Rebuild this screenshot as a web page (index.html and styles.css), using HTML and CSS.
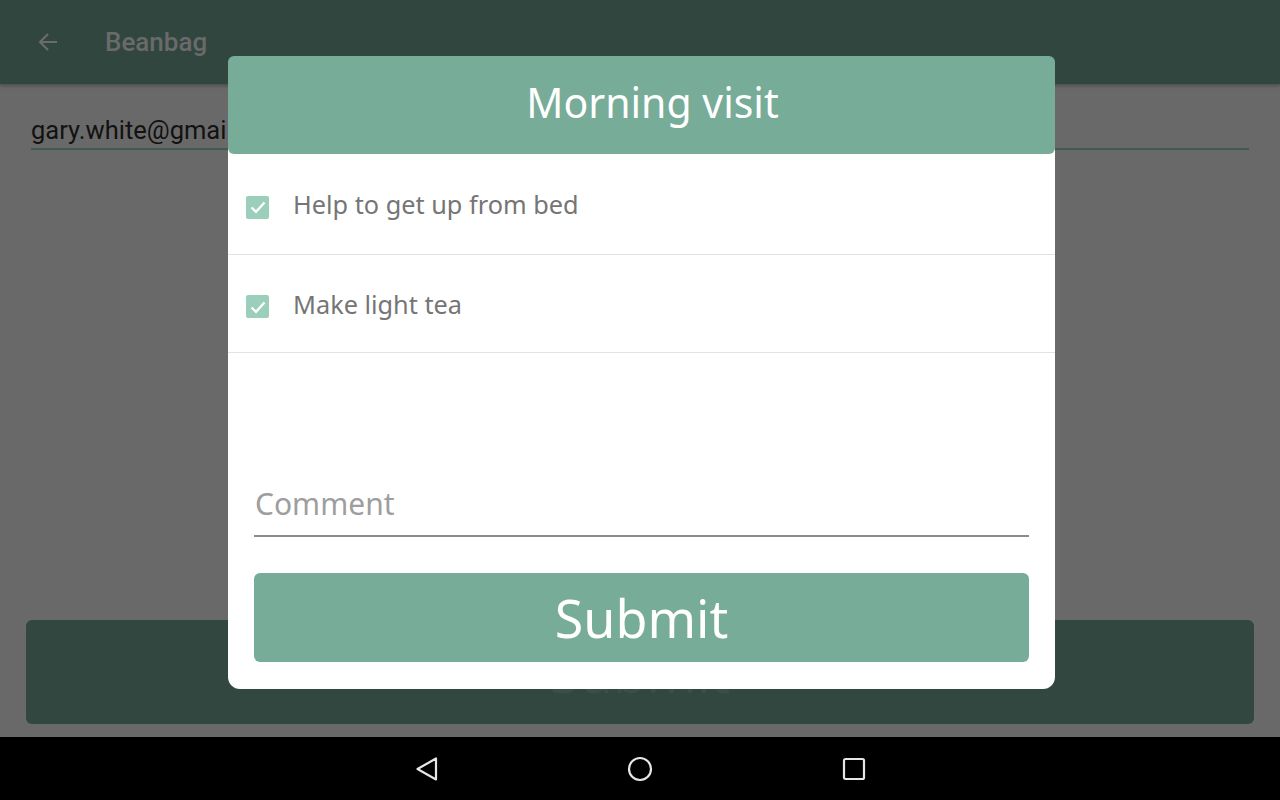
FILE: index.html
```html
<!DOCTYPE html>
<html>
<head>
<meta charset="utf-8">
<link rel="stylesheet" href="styles.css">
</head>
<body>
<div class="screen">
  <header class="appbar">
    <svg class="back" width="22" height="22" viewBox="0 0 22 22"><path d="M20 11H3M11 3L3 11L11 19" fill="none" stroke="#6b6b6b" stroke-width="2.2"/></svg>
    <span class="app-title">Beanbag</span>
  </header>
  <main class="content">
    <div class="email">gary.white@gmail.com</div>
    <div class="spacer"></div>
    <div class="bg-submit">Submit</div>
  </main>
  <nav class="navbar">
    <svg width="24" height="26" viewBox="0 0 24 26"><path d="M21 2.5V23.5L2.5 13Z" fill="none" stroke="#e6e6e6" stroke-width="2.2" stroke-linejoin="round"/></svg>
    <svg width="26" height="26" viewBox="0 0 26 26"><circle cx="13" cy="13" r="11" fill="none" stroke="#e6e6e6" stroke-width="2.2"/></svg>
    <svg width="24" height="24" viewBox="0 0 24 24"><rect x="2" y="2" width="20" height="20" rx="1.5" fill="none" stroke="#e6e6e6" stroke-width="2.2"/></svg>
  </nav>

  <div class="dialog">
    <div class="dialog-head">Morning visit</div>
    <div class="row">
      <span class="check"><svg width="20" height="20" viewBox="0 0 20 20"><path d="M3.5 10.5L8 14.8L16.5 5.5" fill="none" stroke="#fff" stroke-width="2.3"/></svg></span>
      <span class="row-text">Help to get up from bed</span>
    </div>
    <div class="row">
      <span class="check"><svg width="20" height="20" viewBox="0 0 20 20"><path d="M3.5 10.5L8 14.8L16.5 5.5" fill="none" stroke="#fff" stroke-width="2.3"/></svg></span>
      <span class="row-text">Make light tea</span>
    </div>
    <div class="dialog-body">
      <div class="comment">Comment</div>
      <button class="submit">Submit</button>
    </div>
  </div>
</div>
</body>
</html>
```

FILE: styles.css
```css
* { box-sizing: border-box; }
html, body { margin: 0; padding: 0; }
body { width: 1280px; height: 800px; overflow: hidden; background: #696969; }
.screen { position: relative; width: 1280px; height: 800px; display: flex; flex-direction: column; }
.appbar {
  height: 84px; background: #31463f; display: flex; align-items: center;
  padding-left: 37px; box-shadow: 0 2px 3px rgba(0,0,0,0.25); position: relative; z-index: 1;
}
.back { margin-right: 46px; }
.app-title { font-family: Roboto, "Liberation Sans", sans-serif; font-weight: 500; font-size: 26px; color: #6a6a6a; }
.content { flex: 1; display: flex; flex-direction: column; padding: 24px 26px 13px 26px; }
.email {
  margin: 0 5px; font-family: Roboto, sans-serif; font-size: 25.5px; color: #121212;
  padding-top: 8px; height: 42px; border-bottom: 2px solid #3f5a50; line-height: 28px; white-space: nowrap;
}
.spacer { flex: 1; }
.bg-submit {
  height: 104px; background: #31473f; border-radius: 6px; color: #3a4f47;
  font-family: "Noto Sans", sans-serif; font-size: 54px; text-align: center; line-height: 104px;
}
.navbar { height: 63px; background: #000; display: flex; align-items: center; justify-content: center; }
.navbar svg:nth-child(2) { margin-left: 188px; }
.navbar svg:nth-child(3) { margin-left: 189px; }

.dialog {
  position: absolute; left: 228px; top: 56px; width: 827px; height: 633px; z-index: 5;
  background: #fff; border-radius: 12px; display: flex; flex-direction: column;
  font-family: "Noto Sans", sans-serif;
}
.dialog-head {
  height: 98px; background: #77ac98; border-radius: 6px; color: #fff;
  font-size: 41px; text-align: center; line-height: 92px; padding-left: 22px;
}
.row { height: 101px; display: flex; align-items: center; padding: 0 0 0 18px; border-bottom: 1px solid #e2e2e2; }
.row:nth-of-type(3) { height: 98px; }
.check {
  width: 23px; height: 23px; border-radius: 2px; background: #9bcfbb; display: flex;
  align-items: center; justify-content: center; margin-top: 6px;
}
.row-text { margin-left: 24px; font-size: 25.3px; color: #757575; }
.dialog-body { flex: 1; display: flex; flex-direction: column; justify-content: flex-end; padding: 0 26px 27px; }
.comment {
  font-size: 30px; color: #9e9e9e; padding-left: 1px; height: 57px; line-height: 48px;
  border-bottom: 2px solid #8a8a8a; margin-bottom: 36px;
}
.submit {
  height: 89px; border: 0; border-radius: 6px; background: #77ac98; color: #fff;
  font-family: "Noto Sans", sans-serif; font-size: 52px; padding: 0; line-height: 82px;
}
```
